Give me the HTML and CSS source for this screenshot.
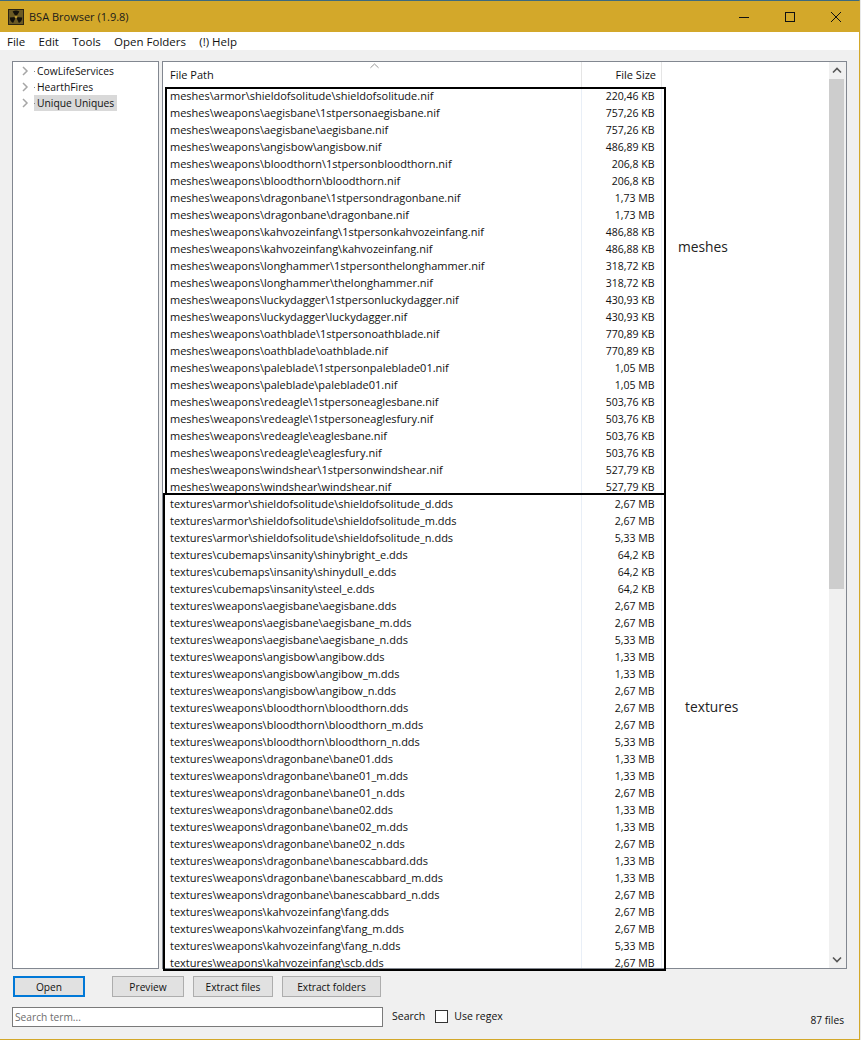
FILE: index.html
```html
<!DOCTYPE html>
<html lang="en">
<head>
<meta charset="utf-8">
<title>BSA Browser (1.9.8)</title>
<link rel="stylesheet" href="styles.css">
</head>
<body>
<div class="window">
  <header class="titlebar">
    <svg class="app-icon" viewBox="0 0 16 16"><rect width="16" height="16" fill="#2b2413"/><rect x="1" y="1" width="14" height="14" fill="#6b5a24"/><path d="M8 8 4.6 2.6A6.4 6.4 0 0 1 11.4 2.6ZM8 8 14.2 8.4A6.4 6.4 0 0 1 10.9 14ZM8 8 5.1 14A6.4 6.4 0 0 1 1.8 8.4Z" fill="#14110a"/><circle cx="8" cy="8" r="1.4" fill="#b8962f"/></svg>
    <span class="title">BSA Browser (1.9.8)</span>
    <div class="controls">
      <svg class="ctl" viewBox="0 0 46 30"><path d="M18 15.5h10" stroke="#111" fill="none"/></svg>
      <svg class="ctl" viewBox="0 0 46 30"><rect x="18.5" y="10.5" width="9" height="9" stroke="#111" fill="none"/></svg>
      <svg class="ctl" viewBox="0 0 46 30"><path d="M18 10l10 10M28 10 18 20" stroke="#111" fill="none"/></svg>
    </div>
  </header>
  <nav class="menubar">
    <span class="menu">File</span><span class="menu">Edit</span><span class="menu">Tools</span><span class="menu">Open Folders</span><span class="menu">(!) Help</span>
  </nav>
  <main class="content">
    <div class="panes">
      <aside class="tree">
        <div class="node"><svg class="chev" viewBox="0 0 8 10"><path d="M2 1l4 4-4 4" stroke="#a6a6a6" stroke-width="1.5" fill="none"/></svg><i class="dot"></i><span class="lbl">CowLifeServices</span></div>
        <div class="node"><svg class="chev" viewBox="0 0 8 10"><path d="M2 1l4 4-4 4" stroke="#a6a6a6" stroke-width="1.5" fill="none"/></svg><i class="dot"></i><span class="lbl">HearthFires</span></div>
        <div class="node"><svg class="chev" viewBox="0 0 8 10"><path d="M2 1l4 4-4 4" stroke="#a6a6a6" stroke-width="1.5" fill="none"/></svg><i class="dot"></i><span class="lbl sel">Unique Uniques</span></div>
      </aside>
      <section class="list">
        <div class="table">
          <div class="head">
            <svg class="sort" viewBox="0 0 10 6"><path d="M.5 5 5 .8 9.500 5" stroke="#8c8c8c" fill="none"/></svg>
            <span class="hpath">File Path</span><span class="hsize">File Size</span><span class="hfill"></span>
          </div>
          <div class="rows">
            <div class="row"><span class="p">meshes\armor\shieldofsolitude\shieldofsolitude.nif</span><span class="s">220,46 KB</span></div>
            <div class="row"><span class="p">meshes\weapons\aegisbane\1stpersonaegisbane.nif</span><span class="s">757,26 KB</span></div>
            <div class="row"><span class="p">meshes\weapons\aegisbane\aegisbane.nif</span><span class="s">757,26 KB</span></div>
            <div class="row"><span class="p">meshes\weapons\angisbow\angisbow.nif</span><span class="s">486,89 KB</span></div>
            <div class="row"><span class="p">meshes\weapons\bloodthorn\1stpersonbloodthorn.nif</span><span class="s">206,8 KB</span></div>
            <div class="row"><span class="p">meshes\weapons\bloodthorn\bloodthorn.nif</span><span class="s">206,8 KB</span></div>
            <div class="row"><span class="p">meshes\weapons\dragonbane\1stpersondragonbane.nif</span><span class="s">1,73 MB</span></div>
            <div class="row"><span class="p">meshes\weapons\dragonbane\dragonbane.nif</span><span class="s">1,73 MB</span></div>
            <div class="row"><span class="p">meshes\weapons\kahvozeinfang\1stpersonkahvozeinfang.nif</span><span class="s">486,88 KB</span></div>
            <div class="row"><span class="p">meshes\weapons\kahvozeinfang\kahvozeinfang.nif</span><span class="s">486,88 KB</span></div>
            <div class="row"><span class="p">meshes\weapons\longhammer\1stpersonthelonghammer.nif</span><span class="s">318,72 KB</span></div>
            <div class="row"><span class="p">meshes\weapons\longhammer\thelonghammer.nif</span><span class="s">318,72 KB</span></div>
            <div class="row"><span class="p">meshes\weapons\luckydagger\1stpersonluckydagger.nif</span><span class="s">430,93 KB</span></div>
            <div class="row"><span class="p">meshes\weapons\luckydagger\luckydagger.nif</span><span class="s">430,93 KB</span></div>
            <div class="row"><span class="p">meshes\weapons\oathblade\1stpersonoathblade.nif</span><span class="s">770,89 KB</span></div>
            <div class="row"><span class="p">meshes\weapons\oathblade\oathblade.nif</span><span class="s">770,89 KB</span></div>
            <div class="row"><span class="p">meshes\weapons\paleblade\1stpersonpaleblade01.nif</span><span class="s">1,05 MB</span></div>
            <div class="row"><span class="p">meshes\weapons\paleblade\paleblade01.nif</span><span class="s">1,05 MB</span></div>
            <div class="row"><span class="p">meshes\weapons\redeagle\1stpersoneaglesbane.nif</span><span class="s">503,76 KB</span></div>
            <div class="row"><span class="p">meshes\weapons\redeagle\1stpersoneaglesfury.nif</span><span class="s">503,76 KB</span></div>
            <div class="row"><span class="p">meshes\weapons\redeagle\eaglesbane.nif</span><span class="s">503,76 KB</span></div>
            <div class="row"><span class="p">meshes\weapons\redeagle\eaglesfury.nif</span><span class="s">503,76 KB</span></div>
            <div class="row"><span class="p">meshes\weapons\windshear\1stpersonwindshear.nif</span><span class="s">527,79 KB</span></div>
            <div class="row"><span class="p">meshes\weapons\windshear\windshear.nif</span><span class="s">527,79 KB</span></div>
            <div class="row"><span class="p">textures\armor\shieldofsolitude\shieldofsolitude_d.dds</span><span class="s">2,67 MB</span></div>
            <div class="row"><span class="p">textures\armor\shieldofsolitude\shieldofsolitude_m.dds</span><span class="s">2,67 MB</span></div>
            <div class="row"><span class="p">textures\armor\shieldofsolitude\shieldofsolitude_n.dds</span><span class="s">5,33 MB</span></div>
            <div class="row"><span class="p">textures\cubemaps\insanity\shinybright_e.dds</span><span class="s">64,2 KB</span></div>
            <div class="row"><span class="p">textures\cubemaps\insanity\shinydull_e.dds</span><span class="s">64,2 KB</span></div>
            <div class="row"><span class="p">textures\cubemaps\insanity\steel_e.dds</span><span class="s">64,2 KB</span></div>
            <div class="row"><span class="p">textures\weapons\aegisbane\aegisbane.dds</span><span class="s">2,67 MB</span></div>
            <div class="row"><span class="p">textures\weapons\aegisbane\aegisbane_m.dds</span><span class="s">2,67 MB</span></div>
            <div class="row"><span class="p">textures\weapons\aegisbane\aegisbane_n.dds</span><span class="s">5,33 MB</span></div>
            <div class="row"><span class="p">textures\weapons\angisbow\angibow.dds</span><span class="s">1,33 MB</span></div>
            <div class="row"><span class="p">textures\weapons\angisbow\angibow_m.dds</span><span class="s">1,33 MB</span></div>
            <div class="row"><span class="p">textures\weapons\angisbow\angibow_n.dds</span><span class="s">2,67 MB</span></div>
            <div class="row"><span class="p">textures\weapons\bloodthorn\bloodthorn.dds</span><span class="s">2,67 MB</span></div>
            <div class="row"><span class="p">textures\weapons\bloodthorn\bloodthorn_m.dds</span><span class="s">2,67 MB</span></div>
            <div class="row"><span class="p">textures\weapons\bloodthorn\bloodthorn_n.dds</span><span class="s">5,33 MB</span></div>
            <div class="row"><span class="p">textures\weapons\dragonbane\bane01.dds</span><span class="s">1,33 MB</span></div>
            <div class="row"><span class="p">textures\weapons\dragonbane\bane01_m.dds</span><span class="s">1,33 MB</span></div>
            <div class="row"><span class="p">textures\weapons\dragonbane\bane01_n.dds</span><span class="s">2,67 MB</span></div>
            <div class="row"><span class="p">textures\weapons\dragonbane\bane02.dds</span><span class="s">1,33 MB</span></div>
            <div class="row"><span class="p">textures\weapons\dragonbane\bane02_m.dds</span><span class="s">1,33 MB</span></div>
            <div class="row"><span class="p">textures\weapons\dragonbane\bane02_n.dds</span><span class="s">2,67 MB</span></div>
            <div class="row"><span class="p">textures\weapons\dragonbane\banescabbard.dds</span><span class="s">1,33 MB</span></div>
            <div class="row"><span class="p">textures\weapons\dragonbane\banescabbard_m.dds</span><span class="s">1,33 MB</span></div>
            <div class="row"><span class="p">textures\weapons\dragonbane\banescabbard_n.dds</span><span class="s">2,67 MB</span></div>
            <div class="row"><span class="p">textures\weapons\kahvozeinfang\fang.dds</span><span class="s">2,67 MB</span></div>
            <div class="row"><span class="p">textures\weapons\kahvozeinfang\fang_m.dds</span><span class="s">2,67 MB</span></div>
            <div class="row"><span class="p">textures\weapons\kahvozeinfang\fang_n.dds</span><span class="s">5,33 MB</span></div>
            <div class="row"><span class="p">textures\weapons\kahvozeinfang\scb.dds</span><span class="s">2,67 MB</span></div>
          </div>
        </div>
        <div class="scrollbar">
          <svg class="arrow" viewBox="0 0 16 17"><path d="M4 10.500l4-4 4 4" stroke="#555" stroke-width="1.6" fill="none"/></svg>
          <div class="track"><div class="thumb"></div></div>
          <svg class="arrow" viewBox="0 0 16 17"><path d="M4 6.500l4 4 4-4" stroke="#555" stroke-width="1.6" fill="none"/></svg>
        </div>
      </section>
    </div>
    <div class="buttons">
      <button class="btn btn-open">Open</button>
      <button class="btn btn-preview">Preview</button>
      <button class="btn btn-files">Extract files</button>
      <button class="btn btn-folders">Extract folders</button>
    </div>
    <div class="searchbar">
      <input class="search" placeholder="Search term...">
      <span class="search-lbl">Search</span>
      <span class="check"></span>
      <span class="regex">Use regex</span>
      <span class="count">87 files</span>
    </div>
  </main>
</div>
<div class="mark mark-meshes"></div>
<div class="mark mark-textures"></div>
<span class="note note-meshes">meshes</span>
<span class="note note-textures">textures</span>
</body>
</html>
```

FILE: styles.css
```css
html, body { margin: 0; padding: 0; height: 100%; overflow: hidden; background: #e9e9e9; }
body { font-family: "Open Sans", "Noto Sans", sans-serif; font-size: 11px; color: #111; position: relative; }
.window { width: 860px; height: 1040px; box-sizing: border-box; border-top: 1px solid #3b6a80; border-right: 1px solid #d3a82a; border-bottom: 1px solid #d3a82a; display: flex; flex-direction: column; background: #f0f0f0; }
.titlebar { height: 31px; flex: none; background: #d3a82a; display: flex; align-items: center; padding-left: 8px; }
.app-icon { width: 16px; height: 16px; flex: none; }
.title { margin-left: 5px; font-size: 11px; color: #1a1a1a; }
.controls { margin-left: auto; display: flex; }
.ctl { width: 46px; height: 30px; display: block; }
.menubar { height: 18px; flex: none; background: #fff; display: flex; align-items: center; font-size: 11.5px; }
.menu { margin-left: 7px; margin-right: 6.300px; }
.content { flex: 1; display: flex; flex-direction: column; min-height: 0; padding: 11px 12px 0 12px; }
.panes { height: 908px; flex: none; display: flex; gap: 3px; }
.tree { width: 147px; flex: none; box-sizing: border-box; border: 1px solid #828790; background: #fff; padding-top: 1px; font-size: 10.300px; }
.node { height: 16px; display: flex; align-items: center; }
.chev { width: 8px; height: 10px; margin-left: 8px; flex: none; }
.dot { width: 1px; height: 1px; background: #888; margin: 0 -1px 0 5px; flex: none; position: relative; z-index: 1; }
.lbl { padding: 0 1px 0 3px; line-height: 16px; }
.sel { background: #d9d9d9; padding-right: 3px; }
.list { flex: 1; min-width: 0; box-sizing: border-box; border: 1px solid #828790; background: #fff; display: flex; }
.table { flex: 1; min-width: 0; overflow: hidden; display: flex; flex-direction: column; }
.head { height: 25px; flex: none; display: flex; align-items: center; position: relative; }
.sort { position: absolute; left: 207px; top: 1px; width: 9px; height: 6px; }
.hpath { width: 419px; box-sizing: border-box; padding-left: 7px; align-self: stretch; line-height: 25px; border-right: 1px solid #e5e5e5; }
.hsize { width: 80px; box-sizing: border-box; padding-right: 5px; text-align: right; align-self: stretch; line-height: 25px; border-right: 1px solid #e5e5e5; }
.rows { flex: 1; min-height: 0; overflow: hidden; }
.row { height: 17px; display: flex; line-height: 17px; }
.p { width: 419px; box-sizing: border-box; padding-left: 7px; border-right: 1px solid #e9eff7; white-space: nowrap; overflow: hidden; }
.s { width: 80px; box-sizing: border-box; padding-right: 6.500px; text-align: right; border-right: 1px solid #e9eff7; white-space: nowrap; font-size: 10.500px; line-height: 18px; }
.scrollbar { width: 17px; flex: none; background: #f0f0f0; display: flex; flex-direction: column; }
.arrow { width: 16px; height: 17px; flex: none; display: block; }
.track { flex: 1; }
.thumb { height: 510px; background: #cdcdcd; margin-right: 2px; }
.buttons { display: flex; margin-top: 7px; height: 21px; }
.btn { box-sizing: border-box; height: 21px; padding: 0; background: #e1e1e1; border: 1px solid #adadad; border-radius: 0; font: inherit; font-size: 10.200px; color: #111; }
.btn-open { width: 72px; margin-left: 1px; border: 2px solid #0078d7; }
.btn-preview { width: 72px; margin-left: 27px; }
.btn-files { width: 80px; margin-left: 9px; }
.btn-folders { width: 99px; margin-left: 9px; }
.searchbar { display: flex; align-items: center; margin-top: 10px; height: 20px; position: relative; font-size: 10.500px; }
.search { box-sizing: border-box; width: 371px; height: 20px; padding: 0 2px 1px; border: 1px solid #7a7a7a; background: #fff; font: inherit; font-size: 10.200px; outline: none; }
.search::placeholder { color: #6d6d6d; opacity: 1; }
.search-lbl { margin-left: 9px; margin-bottom: 2px; }
.check { box-sizing: border-box; width: 13px; height: 13px; margin-left: 10px; margin-bottom: 1px; border: 1px solid #333; background: #fff; }
.regex { margin-left: 6px; margin-bottom: 2px; }
.count { margin-left: auto; margin-right: 3px; margin-top: 6px; font-size: 10.200px; }
.mark { position: absolute; box-sizing: border-box; border: 2px solid #000; }
.mark-meshes { left: 165px; width: 501px; top: 87px; height: 408px; }
.mark-textures { left: 163px; width: 503px; top: 493px; height: 478px; }
.note { position: absolute; font-size: 13.800px; line-height: 20px; color: #222; }
.note-meshes { left: 678px; top: 237px; }
.note-textures { left: 685px; top: 697px; }
```
